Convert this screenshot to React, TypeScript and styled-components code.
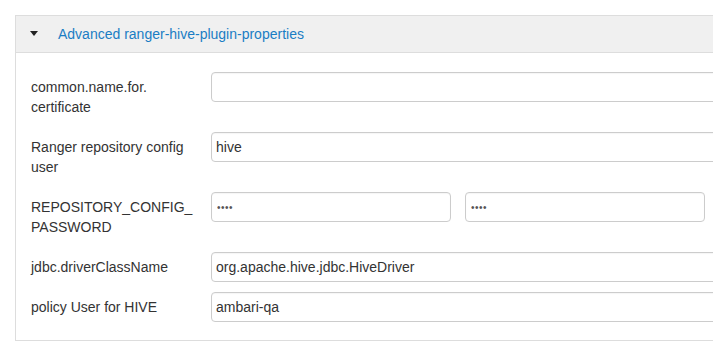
import styled, { createGlobalStyle } from "styled-components";

const GlobalStyle = createGlobalStyle`
  html, body {
    margin: 0;
    padding: 0;
    background: #fff;
    overflow: hidden;
  }
  body {
    font-family: "Helvetica Neue", "Liberation Sans", Arial, sans-serif;
    font-size: 14px;
    color: #333;
  }
`;

const Page = styled.div`
  padding: 15px;
  width: 800px;
`;

const Panel = styled.section`
  border: 1px solid #ddd;
  background: #fff;
`;

const PanelHeader = styled.div`
  display: flex;
  align-items: center;
  height: 36px;
  padding: 0 14px;
  background: #f0f0f0;
  border-bottom: 1px solid #ddd;
`;

const Caret = styled.span`
  width: 0;
  height: 0;
  border-left: 4.5px solid transparent;
  border-right: 4.5px solid transparent;
  border-top: 5px solid #222;
  margin-right: 20px;
  margin-top: -2px;
`;

const Title = styled.a`
  color: #1a7dc4;
  text-decoration: none;
  font-size: 14px;
  line-height: 20px;
`;

const PanelBody = styled.div`
  display: flex;
  flex-direction: column;
  gap: 10px;
  padding: 19px 15px 18px;
`;

const Row = styled.div`
  display: grid;
  grid-template-columns: 180px 1fr;
  align-items: start;
`;

const Label = styled.label`
  padding: 5px 5px 5px 0;
  line-height: 20px;
  font-size: 14px;
  color: #333;
`;

const Controls = styled.div`
  display: flex;
  gap: 14px;
`;

const Input = styled.input<{ $wide?: boolean }>`
  box-sizing: border-box;
  height: 30px;
  width: ${(p) => (p.$wide ? "560px" : "240px")};
  padding: 4px;
  border: 1px solid #ccc;
  border-radius: 4px;
  font-family: "Helvetica Neue", "Liberation Sans", Arial, sans-serif;
  font-size: 14px;
  color: #333;
  background: #fff;
  box-shadow: inset 0 1px 1px rgba(0, 0, 0, 0.04);
  outline: none;

  &[type="password"] {
    font-size: 10px;
    letter-spacing: 0.5px;
    padding-left: 5px;
    color: #555;
  }
`;

type Field = {
  label: React.ReactNode;
  values: { value: string; password?: boolean }[];
};

const fields: Field[] = [
  { label: "common.name.for. certificate", values: [{ value: "" }] },
  { label: "Ranger repository config user", values: [{ value: "hive" }] },
  {
    label: (
      <>
        REPOSITORY_CONFIG_<wbr />PASSWORD
      </>
    ),
    values: [
      { value: "hive", password: true },
      { value: "hive", password: true },
    ],
  },
  { label: "jdbc.driverClassName", values: [{ value: "org.apache.hive.jdbc.HiveDriver" }] },
  { label: "policy User for HIVE", values: [{ value: "ambari-qa" }] },
];

export default function App() {
  return (
    <>
      <GlobalStyle />
      <Page>
        <Panel>
          <PanelHeader>
            <Caret />
            <Title href="#">Advanced ranger-hive-plugin-properties</Title>
          </PanelHeader>
          <PanelBody>
            {fields.map((f, i) => (
              <Row key={i}>
                <Label>{f.label}</Label>
                <Controls>
                  {f.values.map((v, j) => (
                    <Input
                      key={j}
                      type={v.password ? "password" : "text"}
                      defaultValue={v.value}
                      $wide={f.values.length === 1}
                    />
                  ))}
                </Controls>
              </Row>
            ))}
          </PanelBody>
        </Panel>
      </Page>
    </>
  );
}
